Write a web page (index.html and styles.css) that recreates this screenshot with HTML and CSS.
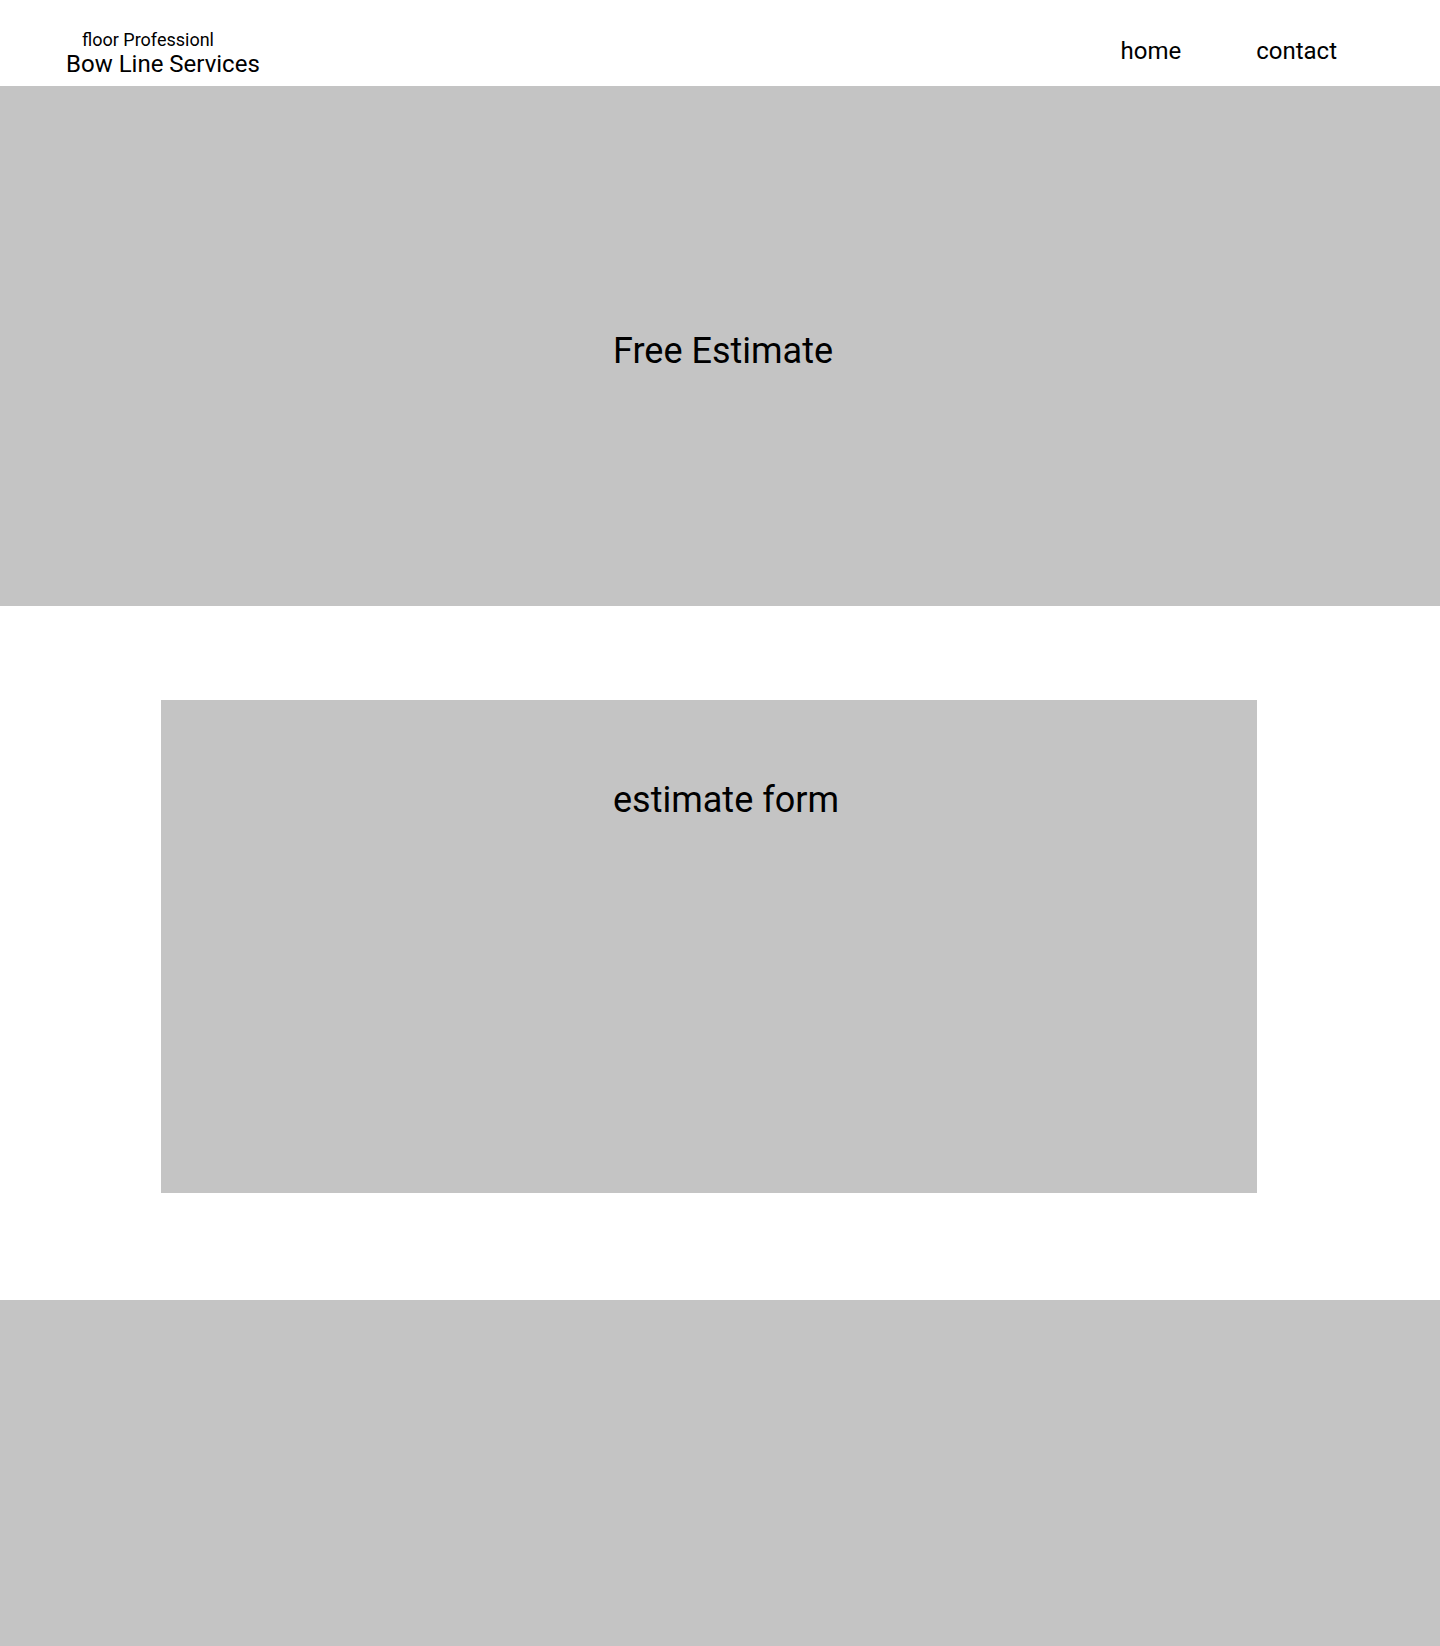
FILE: index.html
```html
<!DOCTYPE html>
<html lang="en">
<head>
<meta charset="utf-8">
<title>Bow Line Services</title>
<link rel="stylesheet" href="styles.css">
</head>
<body>
<header class="site-header">
  <div class="brand">
    <div class="brand-tag">floor Professionl</div>
    <div class="brand-name">Bow Line Services</div>
  </div>
  <nav class="nav">
    <a class="nav-link" href="#">home</a>
    <a class="nav-link" href="#">contact</a>
  </nav>
</header>
<section class="hero">
  <h1 class="hero-title">Free Estimate</h1>
</section>
<section class="form-section">
  <div class="form-box">
    <h2 class="form-title">estimate form</h2>
  </div>
</section>
<footer class="footer"></footer>
</body>
</html>
```
FILE: styles.css
```css
* { box-sizing: border-box; }
html, body { margin: 0; padding: 0; }
body {
  font-family: Roboto, "Liberation Sans", sans-serif;
  color: #000;
  background: #fff;
}
.site-header {
  height: 86px;
  display: flex;
  justify-content: space-between;
  align-items: flex-start;
  padding: 0 103px 0 66px;
}
.brand { padding-top: 29px; }
.brand-tag {
  font-size: 18px;
  line-height: normal;
  padding-left: 16px;
}
.brand-name {
  font-size: 24px;
  line-height: normal;
}
.nav {
  display: flex;
  gap: 75px;
  padding-top: 37px;
}
.nav-link {
  font-size: 24px;
  line-height: normal;
  color: #000;
  text-decoration: none;
}
.hero {
  height: 520px;
  background: #c4c4c4;
  padding: 244px 0 0 613px;
}
.hero-title {
  margin: 0;
  font-size: 36px;
  font-weight: 400;
  line-height: normal;
}
.form-section {
  padding: 94px 183px 107px 161px;
}
.form-box {
  height: 493px;
  background: #c4c4c4;
  padding: 79px 0 0 452px;
}
.form-title {
  margin: 0;
  font-size: 36px;
  font-weight: 400;
  line-height: normal;
}
.footer {
  height: 346px;
  background: #c4c4c4;
}
```
